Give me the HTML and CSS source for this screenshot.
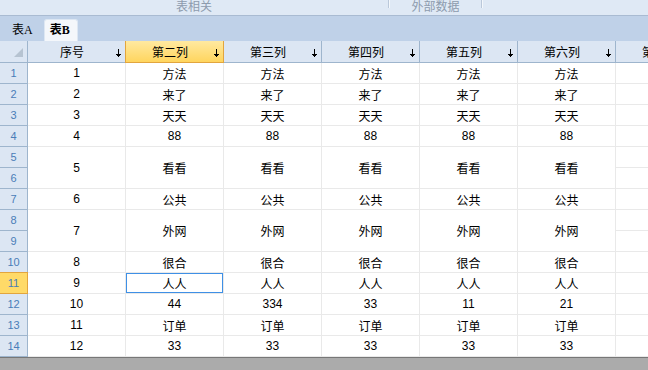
FILE: index.html
```html
<!DOCTYPE html>
<html lang="zh-CN">
<head>
    <meta charset="UTF-8">
    <title>表B</title>
    <link rel="stylesheet" href="styles.css">
</head>
<body>
    <div class="app">
        <div class="ribbon">
            <div class="group group-table"><span class="group-label">表相关</span><span class="group-sep"></span></div>
            <div class="group group-data"><span class="group-label">外部数据</span><span class="group-sep"></span></div>
        </div>

        <div class="tabs">
            <div class="tab">表A</div>
            <div class="tab active">表B</div>
        </div>

        <div class="sheet">
            <div class="grid">
                <!-- header -->
                <div class="cell corner"><span class="corner-mark"></span></div>
                <div class="cell hd"><span class="hd-label">序号</span><svg class="sort" width="5" height="8" viewBox="0 0 5 8"><rect x="2" y="0" width="1" height="8"/><rect x="0" y="5" width="5" height="1"/><rect x="1" y="6" width="3" height="1"/></svg></div>
                <div class="cell hd hd-active"><span class="hd-label">第二列</span><svg class="sort" width="5" height="8" viewBox="0 0 5 8"><rect x="2" y="0" width="1" height="8"/><rect x="0" y="5" width="5" height="1"/><rect x="1" y="6" width="3" height="1"/></svg></div>
                <div class="cell hd"><span class="hd-label">第三列</span><svg class="sort" width="5" height="8" viewBox="0 0 5 8"><rect x="2" y="0" width="1" height="8"/><rect x="0" y="5" width="5" height="1"/><rect x="1" y="6" width="3" height="1"/></svg></div>
                <div class="cell hd"><span class="hd-label">第四列</span><svg class="sort" width="5" height="8" viewBox="0 0 5 8"><rect x="2" y="0" width="1" height="8"/><rect x="0" y="5" width="5" height="1"/><rect x="1" y="6" width="3" height="1"/></svg></div>
                <div class="cell hd"><span class="hd-label">第五列</span><svg class="sort" width="5" height="8" viewBox="0 0 5 8"><rect x="2" y="0" width="1" height="8"/><rect x="0" y="5" width="5" height="1"/><rect x="1" y="6" width="3" height="1"/></svg></div>
                <div class="cell hd"><span class="hd-label">第六列</span><svg class="sort" width="5" height="8" viewBox="0 0 5 8"><rect x="2" y="0" width="1" height="8"/><rect x="0" y="5" width="5" height="1"/><rect x="1" y="6" width="3" height="1"/></svg></div>
                <div class="cell hd"><span class="hd-label">第七列</span><svg class="sort" width="5" height="8" viewBox="0 0 5 8"><rect x="2" y="0" width="1" height="8"/><rect x="0" y="5" width="5" height="1"/><rect x="1" y="6" width="3" height="1"/></svg></div>

                <!-- row 1 -->
                <div class="cell rh">1</div>
                <div class="cell">1</div>
                <div class="cell">方法</div><div class="cell">方法</div><div class="cell">方法</div><div class="cell">方法</div><div class="cell">方法</div>
                <div class="cell"></div>

                <!-- row 2 -->
                <div class="cell rh">2</div>
                <div class="cell">2</div>
                <div class="cell">来了</div><div class="cell">来了</div><div class="cell">来了</div><div class="cell">来了</div><div class="cell">来了</div>
                <div class="cell"></div>

                <!-- row 3 -->
                <div class="cell rh">3</div>
                <div class="cell">3</div>
                <div class="cell">天天</div><div class="cell">天天</div><div class="cell">天天</div><div class="cell">天天</div><div class="cell">天天</div>
                <div class="cell"></div>

                <!-- row 4 -->
                <div class="cell rh">4</div>
                <div class="cell">4</div>
                <div class="cell">88</div><div class="cell">88</div><div class="cell">88</div><div class="cell">88</div><div class="cell">88</div>
                <div class="cell"></div>

                <!-- rows 5-6 merged -->
                <div class="cell rh">5</div>
                <div class="cell span2">5</div>
                <div class="cell span2">看看</div><div class="cell span2">看看</div><div class="cell span2">看看</div><div class="cell span2">看看</div><div class="cell span2">看看</div>
                <div class="cell"></div>
                <div class="cell rh">6</div>
                <div class="cell"></div>

                <!-- row 7 -->
                <div class="cell rh">7</div>
                <div class="cell">6</div>
                <div class="cell">公共</div><div class="cell">公共</div><div class="cell">公共</div><div class="cell">公共</div><div class="cell">公共</div>
                <div class="cell"></div>

                <!-- rows 8-9 merged -->
                <div class="cell rh">8</div>
                <div class="cell span2">7</div>
                <div class="cell span2">外网</div><div class="cell span2">外网</div><div class="cell span2">外网</div><div class="cell span2">外网</div><div class="cell span2">外网</div>
                <div class="cell"></div>
                <div class="cell rh">9</div>
                <div class="cell"></div>

                <!-- row 10 -->
                <div class="cell rh">10</div>
                <div class="cell">8</div>
                <div class="cell">很合</div><div class="cell">很合</div><div class="cell">很合</div><div class="cell">很合</div><div class="cell">很合</div>
                <div class="cell"></div>

                <!-- row 11 (current) -->
                <div class="cell rh rh-active">11</div>
                <div class="cell">9</div>
                <div class="cell selected">人人</div><div class="cell">人人</div><div class="cell">人人</div><div class="cell">人人</div><div class="cell">人人</div>
                <div class="cell"></div>

                <!-- row 12 -->
                <div class="cell rh">12</div>
                <div class="cell">10</div>
                <div class="cell">44</div><div class="cell">334</div><div class="cell">33</div><div class="cell">11</div><div class="cell">21</div>
                <div class="cell"></div>

                <!-- row 13 -->
                <div class="cell rh">13</div>
                <div class="cell">11</div>
                <div class="cell">订单</div><div class="cell">订单</div><div class="cell">订单</div><div class="cell">订单</div><div class="cell">订单</div>
                <div class="cell"></div>

                <!-- row 14 -->
                <div class="cell rh">14</div>
                <div class="cell">12</div>
                <div class="cell">33</div><div class="cell">33</div><div class="cell">33</div><div class="cell">33</div><div class="cell">33</div>
                <div class="cell"></div>
            </div>
        </div>

        <div class="statusbar"></div>
    </div>
</body>
</html>
```

FILE: styles.css
```css
body {
    margin: 0;
    font-family: 'Liberation Sans', 'Noto Sans CJK SC', sans-serif;
    font-size: 12px;
    color: #000;
    background-color: #fff;
}
.app {
    width: 648px;
    height: 370px;
    display: flex;
    flex-direction: column;
    overflow: hidden;
}

/* ribbon group captions */
.ribbon {
    height: 15px;
    flex: none;
    display: flex;
    background-color: #dfe9f5;
    border-bottom: 1px solid #a9bbd2;
}
.group {
    display: flex;
    align-items: flex-start;
}
.group-table {
    width: 390px;
}
.group-data {
    width: 93px;
}
.group-label {
    flex: 1;
    text-align: center;
    line-height: 14px;
    color: #8d9bad;
}
.group-sep {
    width: 1px;
    height: 8px;
    background-color: #bac8da;
    border-right: 1px solid #f3f7fb;
}

/* sheet tabs */
.tabs {
    height: 25px;
    flex: none;
    display: flex;
    align-items: flex-end;
    gap: 4px;
    padding-left: 6px;
    background-color: #bfd1e8;
}
.tab {
    height: 21px;
    line-height: 20px;
    padding: 0 7px 0 6px;
    font-family: 'Liberation Serif', 'Noto Sans CJK SC', serif;
}
.tab.active {
    background-color: #f4f7fb;
    border: 1px solid #dde7f3;
    border-bottom: none;
    border-radius: 3px 3px 0 0;
    padding: 0 7px 0 5px;
    font-weight: bold;
}

/* grid */
.sheet {
    height: 316px;
    flex: none;
    overflow: hidden;
}
.grid {
    display: grid;
    grid-template-columns: 28px repeat(7, 98px);
    grid-template-rows: 22px;
    grid-auto-rows: 21px;
    width: 714px;
}
.cell {
    box-sizing: border-box;
    display: flex;
    align-items: center;
    justify-content: center;
    border-right: 1px solid #e9e9e9;
    border-bottom: 1px solid #e9e9e9;
    white-space: nowrap;
}
.span2 {
    grid-row: span 2;
}
.selected {
    box-shadow: inset 0 0 0 1px #3f90e6;
}

.corner,
.hd,
.rh {
    background-color: #dce6f3;
    border-color: #9eb5cd;
}
.corner {
    justify-content: flex-end;
    align-items: flex-end;
    padding: 0 4px 5px 0;
}
.corner-mark {
    width: 0;
    height: 0;
    border-left: 9px solid transparent;
    border-bottom: 9px solid #b6c3d1;
}
.hd {
    padding-right: 4px;
}
.hd-label {
    flex: 1;
    text-align: center;
}
.sort {
    flex: none;
    width: 5px;
    fill: #000;
    margin-top: 2px;
}
.hd-active {
    background: linear-gradient(#ffe9a0, #ffd55e);
    border-color: #e2a53e;
    box-shadow: -1px 0 0 #e2a53e;
}
.rh {
    font-size: 11px;
    color: #4a7db8;
}
.rh-active {
    background-color: #ffda68;
    border-color: #e2a53e;
    box-shadow: 0 -1px 0 #e2a53e;
}

.statusbar {
    flex: 1;
    background-color: #ababab;
    border-top: 1px solid #777;
}
```
